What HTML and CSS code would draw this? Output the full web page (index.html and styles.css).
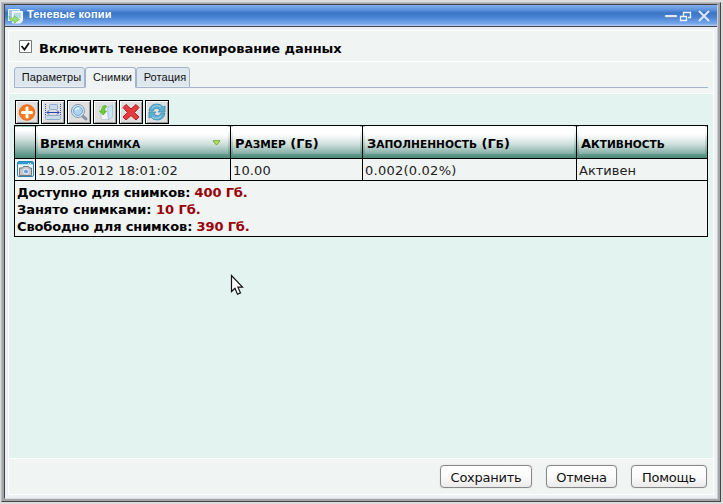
FILE: index.html
```html
<!DOCTYPE html>
<html lang="ru">
<head>
<meta charset="utf-8">
<title>Теневые копии</title>
<link rel="stylesheet" href="styles.css">
</head>
<body>
<div class="frame"><div class="window">
  <header class="titlebar">
    <svg class="logo" width="16" height="16" viewBox="0 0 16 16"><path d="M.5 1.500h11v11H.5z" fill="#9ecbe0" stroke="#e9f5fa"/><path d="M4.500 3.500h10v9l-2 2.500h-8z" fill="#e7f3f8" stroke="#fff"/><path d="M6 5h7v5H6z" fill="#b5dbea"/><path d="M1 8q1 3 5 2V7.500l5.500 4-5.500 4V13Q1 14 1 8" fill="#97dc72" stroke="#68b850" stroke-width=".6"/></svg>
    <span class="title">Теневые копии</span>
    <svg class="controls" width="48" height="16" viewBox="0 0 48 16"><path d="M2 8.500h10" stroke="#7190bd" stroke-width="3" stroke-linecap="round"/><path d="M2 8h10" stroke="#dfe8f5" stroke-width="2.200" stroke-linecap="round"/><path d="M19.500 8V4.500h7v5H24M19 4.500h8M16.500 8.500h6v4h-6zM16 8.500h7" fill="none" stroke="#edf4ff" stroke-width="1.300"/><path d="M35.500 3.500l9 9m0-9l-9 9" stroke="#dce8fa" stroke-width="2" stroke-linecap="round"/></svg>
  </header>
  <main class="body"><div class="panel">
    <label class="enable"><svg width="13" height="13" viewBox="0 0 13 13"><path d="M.5.500h12v12H.5z" fill="#fff" stroke="#777"/><path d="M2.500 6l3 3.500L10 3" fill="none" stroke="#111" stroke-width="1.800"/></svg><b>Включить теневое копирование данных</b></label>
    <div class="tabzone"><nav class="tabs"><span class="tab t1">Параметры</span><span class="tab t2 active">Снимки</span><span class="tab t3">Ротация</span><span class="rest"></span></nav></div>
    <section class="content">
      <div class="tools">
        <span class="tool"><svg width="20" height="20" viewBox="0 0 20 20"><circle cx="10" cy="10.500" r="7.800" fill="#f47b20" stroke="#e85714" stroke-width=".8"/><path d="M10 6v9M5.500 10.500h9" stroke="#fff" stroke-width="3" stroke-linecap="round"/></svg></span>
        <span class="tool"><svg width="20" height="20" viewBox="0 0 20 20"><rect x="6.500" y="2.500" width="8" height="5" rx="1" fill="#c9dcef" stroke="#8facc8"/><path d="M2.500 2v12m15-12v12" stroke="#3452c5" stroke-dasharray="1 1"/><path d="M4 10.500h12M6 8.500l-2 2 2 2m8-4 2 2-2 2" fill="none" stroke="#2346b2"/><rect x="2.500" y="13.500" width="15" height="4" rx="1" fill="#c9dcef" stroke="#8facc8"/></svg></span>
        <span class="tool"><svg width="20" height="20" viewBox="0 0 20 20"><path d="m13.500 14 3.500 3" stroke="#8c95a2" stroke-width="3" stroke-linecap="round"/><circle cx="9" cy="9" r="6.500" fill="#dce8f1" stroke="#8397b1"/><circle cx="9" cy="9" r="4.500" fill="#aed3f0" stroke="#72a7d6"/><path d="M6.500 8.500q1-3 4-2" fill="none" stroke="#e4f7ff" stroke-width="1.500"/></svg></span>
        <span class="tool"><svg width="20" height="20" viewBox="0 0 20 20"><path d="M4.500 4.500h9v13h-7z" fill="#f2f4f5" stroke="#c6ced1"/><path d="m12.500 6 5-3v12l-4 3z" fill="#c9e2f5" stroke="#a9c9df"/><path d="M10.500 3.500q-4 0-4 5.500H4.500L8.200 13l3.300-4H9.500q0-3 2-4z" fill="#70d032" stroke="#43a522" stroke-width=".7"/></svg></span>
        <span class="tool"><svg width="20" height="20" viewBox="0 0 20 20"><path d="m5 2.500 5 4.500 5-4.500 3 3-4.500 5 4.500 4.500-3 3-5-4.500L5 18l-3-3 4.500-4.500-4.500-5z" fill="#e43b40" stroke="#b31a22"/></svg></span>
        <span class="tool"><svg width="20" height="20" viewBox="0 0 20 20"><path d="M2 9q1-7 8-7 4 0 6 3l2-1v6h-7l2-2q-5-4-7 1zM18 11q-1 7-8 7-4 0-6-3l-2 1v-6h7l-2 2q5 4 7-1z" fill="#5eafd0" stroke="#3a91b7" stroke-width=".8"/><path d="M5 6q4-4 9-1M5 15q5 3 9-1" fill="none" stroke="#a7d8e8"/></svg></span>
      </div>
      <table>
        <colgroup><col class="c1"><col class="c2"><col class="c3"><col class="c4"><col></colgroup>
        <thead><tr><th class="plain"></th><th><div class="head"><span>В<small>ремя снимка</small></span><svg class="sort" width="9" height="6" viewBox="0 0 9 6"><path d="M1 .8h7L4.500 5z" fill="#b9e86c" stroke="#6ba924"/></svg></div></th><th><div class="head"><span>Р<small>азмер</small> (Г<small>б</small>)</span></div></th><th><div class="head"><span>З<small>аполненность</small> (Г<small>б</small>)</span></div></th><th><div class="head"><span>А<small>ктивность</small></span></div></th></tr></thead>
        <tbody><tr><td class="icon"><svg width="17" height="17" viewBox="0 0 17 17"><rect x=".5" y=".5" width="16" height="15" rx="1.500" fill="#eaf5fc" stroke="#2785b5"/><path d="M1 2h15" stroke="#2f99cf" stroke-width="2.500"/><path d="M11 2.500h4" stroke="#fff" stroke-dasharray="1 1"/><path d="M2.500 7h3l1-1.500h5l1 1.500h2v7.500h-12z" fill="#c5c7c9" stroke="#71777d"/><circle cx="9" cy="10.500" r="2.500" fill="#6e9ddd" stroke="#eff5ff"/></svg></td><td><span class="d2">19.05.2012 18:01:02</span></td><td><span class="d2">10.00</span></td><td><span class="d4">0.002(0.02%)</span></td><td><span>Активен</span></td></tr></tbody>
        <tfoot><tr><td colspan="5"><p>Доступно для снимков: <em>400 Гб.</em></p><p class="used">Занято снимками: <em>10 Гб.</em></p><p>Свободно для снимков: <em>390 Гб.</em></p></td></tr></tfoot>
      </table>
    </section>
    <footer class="actions"><button class="b1">Сохранить</button><button class="b2">Отмена</button><button class="b3">Помощь</button></footer>
  </div></main>
</div></div>
<svg class="cursor" width="14" height="22" viewBox="0 0 14 22"><path d="M1.500 1.500v16l3.500-3.300 2.500 6 3-1.300-2.600-5.700h4.600z" fill="#fff" stroke="#111" stroke-width="1.200"/></svg>
</body>
</html>
```
FILE: styles.css
```css
* { box-sizing: border-box; }
body { margin: 0; width: 723px; height: 504px; overflow: hidden; padding: 2px 2px 2px 1px; background: #dcdcdc; font: 13px "DejaVu Sans", sans-serif; color: #222; }
.frame { height: 500px; border: 1px solid #b9bdc0; border-right: 1px solid #444; border-bottom: 1px solid #444; background: #a1a5a8; padding: 1px 2px 2px 2px; }
.window { height: 495px; border: 1px solid #444; border-right-color: #ccd0d4; border-bottom-color: #d9dce0; background: #edf0f5; display: flex; flex-direction: column; }
.titlebar { height: 22px; display: flex; align-items: center; padding: 0 5px 0 3px; border-bottom: 1px solid #444; background: linear-gradient(#82aef0 0, #5f93dc 22%, #3974c7 38%, #4b84d4 60%, #79a9ec 90%, #b9d1f2 100%); color: #fff; }
.title { font: bold 11px "Liberation Sans", sans-serif; letter-spacing: .15px; margin: -4px 0 0 3px; }
.logo { margin-top: 1px; }
.controls { margin-left: auto; }
.body { flex: 1; padding: 3px; }
.panel { height: 465px; border: 1px solid #fff; background: #f0f4f3; display: flex; flex-direction: column; }
.enable { display: flex; height: 31px; border-bottom: 1px solid #fff; padding: 9px 0 0 10px; color: #000; }
.enable b { margin: 1px 0 0 7px; line-height: 16px; font-size: 13px; letter-spacing: -.03px; }
.tabzone { height: 32px; border-bottom: 1px solid #fff; padding: 5px 5px 0; }
.tabs { height: 21px; display: flex; font: 11px "Liberation Sans", sans-serif; letter-spacing: .08px; color: #111; }
.tab { height: 21px; border: 1px solid #a2b3cb; border-radius: 3px 3px 0 0; background: #dfe7ee; text-align: center; line-height: 19px; padding-left: 4px; box-shadow: inset 0 -1px #e9eef3; white-space: nowrap; }
.t1 { width: 71px; } .t2 { width: 51px; } .t3 { width: 54px; }
.tab.active { background: #f0f4f5; border-bottom-color: #f0f4f5; box-shadow: none; }
.rest { flex: 1; border-bottom: 1px solid #a2b3cb; }
.content { flex: 1; background: #e3f3f0; border-bottom: 1px solid #fff; padding: 6px 5px; }
.tools { display: flex; gap: 2px; height: 25px; padding-left: 1px; }
.tool { width: 24px; height: 24px; border: 1px solid #000; background: #dfdfdf; box-shadow: inset 1px 1px #fff, inset -1px -1px #999; display: grid; place-items: center; }
table { width: 694px; border-collapse: collapse; table-layout: fixed; background: #f0f4f3; }
.c1 { width: 21px; } .c2 { width: 195px; } .c3 { width: 132px; } .c4 { width: 214px; }
th, td { border: 1px solid #000; padding: 0 2px; text-align: left; white-space: nowrap; }
th { height: 33px; padding: 0 2px; font-size: 13px; color: #000; background: linear-gradient(#fff 0, #fff 12%, #d3e2df 38%, #8db3aa 70%, #5a9585 90%, #4a8775 100%); }
.head { height: 28px; margin-bottom: 4px; display: flex; justify-content: space-between; align-items: center; padding: 7px 7px 0 2px; line-height: 16px; background: linear-gradient(#fff 0, #fff 30%, #cfdfdc 65%, #83aea4 100%); }
.sort { margin-top: -2px; }
small { font-size: 10.6px; text-transform: uppercase; }
td { height: 22px; padding-top: 2px; }
td.icon { padding: 0 0 0 2px; } .icon svg { display: block; }
.d2 { letter-spacing: .15px; } .d4 { letter-spacing: .24px; }
tfoot td { height: 56px; padding: 3px 2px 1px; font-weight: bold; color: #000; letter-spacing: -.14px; }
tfoot p { margin: 0; line-height: 17px; } .used { letter-spacing: -.05px; }
em { font-style: normal; color: #990008; }
.actions { height: 35px; display: flex; justify-content: flex-end; gap: 14px; padding: 6px 6px 0; }
button { height: 23px; border: 1px solid #888; border-radius: 4px; background: linear-gradient(#fff 0, #fbfbfb 50%, #eaeaea 100%); color: #111; padding: 2px 0 0; font: 13px "DejaVu Sans", sans-serif; letter-spacing: -.25px; box-shadow: 0 0 1px #aaa; }
.b1 { width: 92px; } .b2 { width: 71px; } .b3 { width: 76px; }
.cursor { position: absolute; left: 230px; top: 274px; }
```
